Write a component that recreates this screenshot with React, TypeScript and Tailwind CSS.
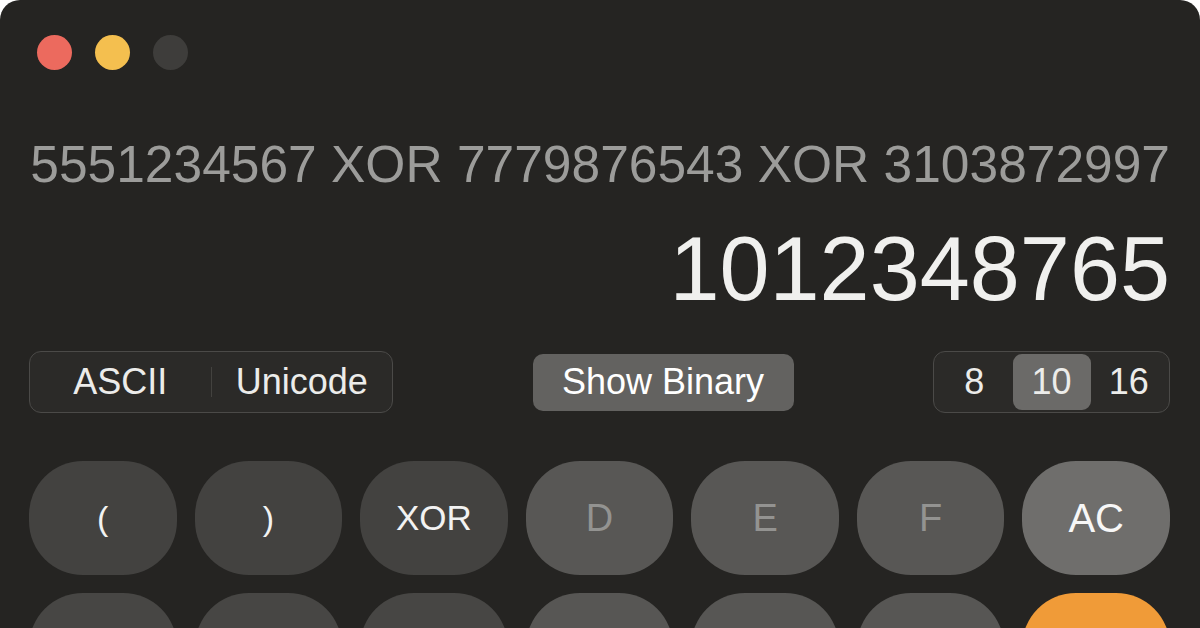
import React from "react";

type Key = { label: string; bg: string; text: string; size: string };

const row1: Key[] = [
  { label: "(", bg: "bg-[#434240]", text: "text-[#f2f2f2]", size: "text-[34px]" },
  { label: ")", bg: "bg-[#434240]", text: "text-[#f2f2f2]", size: "text-[34px]" },
  { label: "XOR", bg: "bg-[#434240]", text: "text-[#f2f2f2]", size: "text-[35px]" },
  { label: "D", bg: "bg-[#585755]", text: "text-[#939391]", size: "text-[38px]" },
  { label: "E", bg: "bg-[#585755]", text: "text-[#939391]", size: "text-[38px]" },
  { label: "F", bg: "bg-[#585755]", text: "text-[#939391]", size: "text-[38px]" },
  { label: "AC", bg: "bg-[#6f6e6c]", text: "text-[#f7f7f7]", size: "text-[40px]" },
];

const row2: Key[] = [
  { label: "", bg: "bg-[#474644]", text: "", size: "" },
  { label: "", bg: "bg-[#474644]", text: "", size: "" },
  { label: "", bg: "bg-[#474644]", text: "", size: "" },
  { label: "", bg: "bg-[#575654]", text: "", size: "" },
  { label: "", bg: "bg-[#575654]", text: "", size: "" },
  { label: "", bg: "bg-[#575654]", text: "", size: "" },
  { label: "", bg: "bg-[#f09b38]", text: "", size: "" },
];

function KeyButton({ k }: { k: Key }) {
  return (
    <div
      className={`h-[114px] rounded-[54px] flex items-center justify-center ${k.bg} ${k.text} ${k.size}`}
    >
      {k.label}
    </div>
  );
}

export default function App() {
  return (
    <div className="w-[1200px] h-[628px] bg-white overflow-hidden font-['Liberation_Sans',sans-serif]">
      <div className="w-full h-full bg-[#252422] rounded-t-[20px] flex flex-col pl-[29px] pr-[30px] pt-[35px]">
        <div className="flex gap-[23px] pl-[8px] h-[35px]">
          <div className="w-[35px] h-[35px] rounded-full bg-[#ec6a5e]" />
          <div className="w-[35px] h-[35px] rounded-full bg-[#f4bf4f]" />
          <div className="w-[35px] h-[35px] rounded-full bg-[#3e3d3b]" />
        </div>

        <div className="mt-[64px] h-[60px] leading-[60px] text-right text-[51.5px] text-[#9c9c9a] whitespace-nowrap">
          5551234567 XOR 7779876543 XOR 3103872997
        </div>
        <div className="mt-[30px] h-[90px] leading-[90px] text-right text-[90px] text-[#f0f0ee] whitespace-nowrap">
          1012348765
        </div>

        <div className="mt-[25px] h-[2px] bg-[#474644]" />

        <div className="mt-[12px] flex items-center justify-between">
          <div className="w-[364px] h-[62px] rounded-[12px] border border-[#4b4a48] bg-[#2b2a28] flex items-center text-[36px] text-[#ececea]">
            <div className="flex-1 text-center">ASCII</div>
            <div className="w-px h-[30px] bg-[#43423f]" />
            <div className="flex-1 text-center">Unicode</div>
          </div>
          <div className="w-[261px] h-[57px] rounded-[10px] bg-[#636260] flex items-center justify-center text-[36px] text-white">
            Show Binary
          </div>
          <div className="w-[237px] h-[62px] rounded-[12px] border border-[#4b4a48] bg-[#2b2a28] flex items-center p-[2px] text-[36px] text-[#ececea]">
            <div className="flex-1 h-full flex items-center justify-center">8</div>
            <div className="w-[78px] h-full rounded-[9px] bg-[#6b6a68] flex items-center justify-center">
              10
            </div>
            <div className="flex-1 h-full flex items-center justify-center">16</div>
          </div>
        </div>

        <div className="mt-[48px] grid grid-cols-7 gap-x-[18px] gap-y-[18px]">
          {row1.map((k, i) => (
            <KeyButton key={"a" + i} k={k} />
          ))}
          {row2.map((k, i) => (
            <KeyButton key={"b" + i} k={k} />
          ))}
        </div>
      </div>
    </div>
  );
}
